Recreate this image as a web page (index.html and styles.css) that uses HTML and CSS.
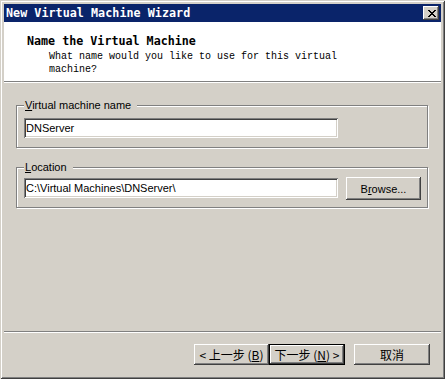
FILE: index.html
```html
<!DOCTYPE html>
<html>
<head>
<meta charset="utf-8">
<link rel="stylesheet" href="styles.css">
</head>
<body>
<div class="window">
  <div class="titlebar">
    <span class="title">New Virtual Machine Wizard</span>
    <button class="close" aria-label="Close">
      <svg width="8" height="7" viewBox="0 0 8 7" shape-rendering="crispEdges"><path d="M0 0h2v1H0zM6 0h2v1H6zM1 1h2v1H1zM5 1h2v1H5zM2 2h4v1H2zM3 3h2v1H3zM2 4h4v1H2zM1 5h2v1H1zM5 5h2v1H5zM0 6h2v1H0zM6 6h2v1H6z" fill="#000"/></svg>
    </button>
  </div>
  <div class="header">
    <div class="h-title">Name the Virtual Machine</div>
    <div class="h-sub">What name would you like to use for this virtual<br>machine?</div>
  </div>
  <div class="body">
    <fieldset class="group g1">
      <legend><u>V</u>irtual machine name</legend>
      <input class="field" type="text" value="DNServer">
    </fieldset>
    <fieldset class="group g2">
      <legend><u>L</u>ocation</legend>
      <div class="row">
        <input class="field" type="text" value="C:\Virtual Machines\DNServer\">
        <button class="btn browse">B<u>r</u>owse...</button>
      </div>
    </fieldset>
  </div>
  <div class="footer">
    <button class="btn nav">&lt; 上一步 (<u>B</u>)</button>
    <button class="btn nav default">下一步 (<u>N</u>) &gt;</button>
    <button class="btn nav cancel">取消</button>
  </div>
</div>
</body>
</html>
```
FILE: styles.css
```css
* {
  box-sizing: border-box;
  margin: 0;
  padding: 0;
}
html, body {
  width: 445px;
  height: 379px;
  overflow: hidden;
}
body {
  background: #d4d0c8;
  font-family: "Liberation Sans", Arial, sans-serif;
  font-size: 11px;
  color: #000;
}
.window {
  width: 445px;
  height: 379px;
  padding: 4px;
  display: flex;
  flex-direction: column;
  background: #d4d0c8;
  box-shadow: inset 1px 1px #d4d0c8, inset -1px -1px #404040, inset 2px 2px #fff, inset -2px -2px #808080;
}
.titlebar {
  height: 18px;
  flex: none;
  background: #0a246a;
  display: flex;
  align-items: center;
  justify-content: space-between;
  padding: 0 2px 0 2px;
}
.title {
  color: #fff;
  font: bold 11.7px/18px "DejaVu Sans Mono", "Liberation Mono", monospace;
  letter-spacing: 0.05px;
}
.close {
  width: 16px;
  height: 14px;
  border: 0;
  background: #d4d0c8;
  display: flex;
  align-items: center;
  justify-content: center;
  padding: 0 0 0 1px;
  box-shadow: inset -1px -1px #404040, inset 1px 1px #fff, inset -2px -2px #808080, inset 2px 2px #d4d0c8;
}
.close svg {
  display: block;
}
.header {
  height: 60px;
  flex: none;
  background: #fff;
  border-bottom: 1px solid #808080;
  padding: 12px 0 0 23px;
}
.h-title {
  font: bold 11.7px/14px "DejaVu Sans Mono", "Liberation Mono", monospace;
}
.h-sub {
  font: 10px/13px "Liberation Mono", monospace;
  padding-left: 22px;
  margin-top: 2px;
}
.body {
  flex: 1;
  border-top: 1px solid #fff;
  padding: 16px 13px 0 12px;
}
.group {
  border: 1px solid #808080;
  box-shadow: inset 1px 1px #fff, 1px 1px #fff;
  min-inline-size: 0;
}
.group legend {
  padding: 0 6px 0 1px;
  background: #d4d0c8;
  font-size: 11px;
  line-height: 13px;
}
.g1 {
  padding: 6px 6px 9px 7px;
}
.g2 {
  margin-top: 13px;
  padding: 3px 6px 7px 7px;
}
.row {
  display: flex;
  align-items: flex-start;
  gap: 8px;
}
.field {
  display: block;
  width: 314px;
  height: 20px;
  border: 0;
  outline: none;
  background: #fff;
  font-family: "Liberation Sans", Arial, sans-serif;
  font-size: 11px;
  color: #000;
  padding: 0 2px 0 2px;
  box-shadow: inset 1px 1px #808080, inset -1px -1px #fff, inset 2px 2px #404040, inset -2px -2px #d4d0c8;
}
.row .field {
  margin-top: 1px;
}
.btn {
  border: 0;
  background: #d4d0c8;
  color: #000;
  box-shadow: inset -1px -1px #404040, inset 1px 1px #fff, inset -2px -2px #808080, inset 2px 2px #d4d0c8;
  display: flex;
  align-items: center;
  justify-content: center;
}
.browse {
  width: 75px;
  height: 23px;
  font-family: "Liberation Sans", Arial, sans-serif;
  font-size: 11px;
}
.footer {
  height: 44px;
  flex: none;
  border-top: 1px solid #808080;
  box-shadow: inset 0 1px #fff;
  display: flex;
  justify-content: flex-end;
  align-items: flex-start;
  padding: 12px 11px 0 0;
}
.nav {
  width: 75px;
  height: 21px;
  font-family: "Noto Sans CJK SC", "Liberation Sans", sans-serif;
  font-size: 12px;
  line-height: 14px;
  white-space: pre;
}
.default {
  width: 76px;
  border: 1px solid #000;
}
.cancel {
  margin-left: 9px;
  width: 76px;
}
```
